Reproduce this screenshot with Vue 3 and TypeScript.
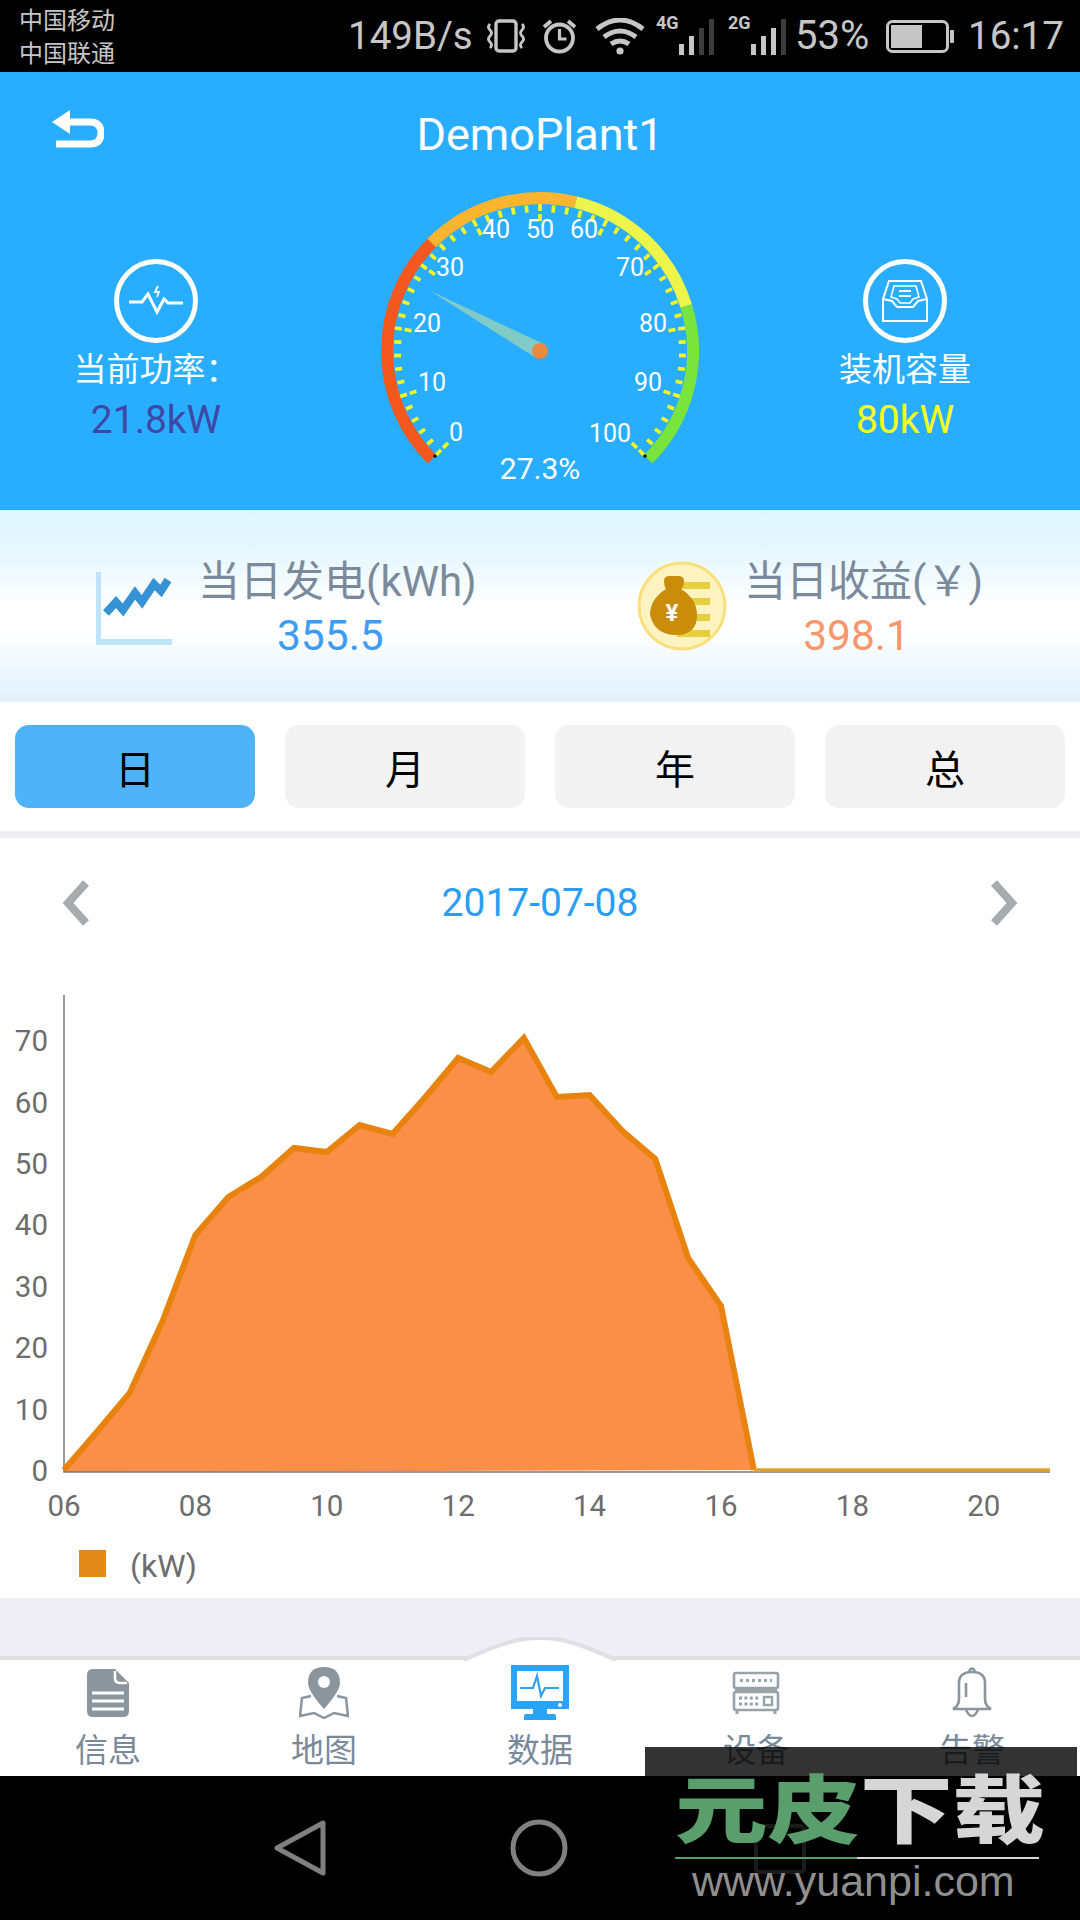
<script setup lang="ts">
// gauge geometry: 270deg sweep, centre in svg coords
const cx = 228
const cy = 157
const polar = (r: number, pct: number) => {
  const a = ((-225 + pct * 2.7) * Math.PI) / 180
  return { x: +(cx + r * Math.cos(a)).toFixed(2), y: +(cy + r * Math.sin(a)).toFixed(2) }
}
const arc = (from: number, to: number) => {
  const a = polar(153, from)
  const b = polar(153, to)
  const large = (to - from) * 2.7 > 180 ? 1 : 0
  return `M${a.x} ${a.y}A153 153 0 ${large} 1 ${b.x} ${b.y}`
}
const bands = [
  { d: arc(0, 33.4), color: '#f4581f' },
  { d: arc(33.3, 55), color: '#fdb52f' },
  { d: arc(55, 77), color: '#edf54a' },
  { d: arc(77, 100), color: '#79e43c' },
]
const ticks = Array.from({ length: 51 }, (_, i) => {
  const pct = i * 2
  const major = i % 5 === 0
  const a = polar(major ? 147 : 146, pct)
  const b = polar(major ? 127 : 139, pct)
  return { x1: a.x, y1: a.y, x2: b.x, y2: b.y, major, key: i }
})
const gaugeLabels = [
  { t: '0', x: 144, y: 247 },
  { t: '10', x: 120, y: 197 },
  { t: '20', x: 115, y: 138 },
  { t: '30', x: 138, y: 82 },
  { t: '40', x: 184, y: 44 },
  { t: '50', x: 228, y: 44 },
  { t: '60', x: 272, y: 44 },
  { t: '70', x: 318, y: 82 },
  { t: '80', x: 341, y: 138 },
  { t: '90', x: 336, y: 197 },
  { t: '100', x: 298, y: 248 },
]
const tip = polar(125, 27.3)
const perp = (-225 + 27.3 * 2.7 + 90) * (Math.PI / 180)
const needle = `${tip.x},${tip.y} ${cx + 8 * Math.cos(perp)},${cy + 8 * Math.sin(perp)} ${cx - 8 * Math.cos(perp)},${cy - 8 * Math.sin(perp)}`
const endCaps = [polar(150, 0), polar(147, 0), polar(150, 100), polar(147, 100)]

// chart: half-hour samples, pixel y values read on the 1920 page
const values = [
  1470, 1432, 1393, 1321, 1235, 1197, 1177, 1148, 1152, 1125, 1134, 1097, 1058, 1072, 1038, 1097, 1095,
  1131, 1159, 1258, 1306, 1470,
]
const xAt = (i: number) => +(64 + i * 32.85).toFixed(1)
const peak = values.map((y, i) => `${xAt(i)},${y}`).join(' ')
const area = `${peak} 64,1472`
const yLabels = [0, 10, 20, 30, 40, 50, 60, 70].map((v, i) => ({ v, y: 1471 - i * 61.4 }))
const xLabels = ['06', '08', '10', '12', '14', '16', '18', '20'].map((t, i) => ({ t, x: 64 + i * 131.4 }))

const periods = ['日', '月', '年', '总']
</script>

<template>
  <div class="page">
    <div class="status">
      <div class="carriers">
        <span>中国移动</span>
        <span>中国联通</span>
      </div>
      <span class="speed">149B/s</span>
      <svg class="st vib" width="40" height="34" viewBox="0 0 40 34" fill="none" stroke="#c6c6c6">
        <rect x="10" y="2" width="20" height="30" rx="3" stroke-width="3.4" />
        <path d="M4 5q-3 3 0 6t0 6 0 6 0 6M36 5q3 3 0 6t0 6 0 6 0 6" stroke-width="2.8" />
      </svg>
      <svg class="st alarm" width="37" height="36" viewBox="0 0 37 36" fill="none" stroke="#c6c6c6">
        <circle cx="18.5" cy="20" r="13.5" stroke-width="3.8" />
        <path d="M18.5 11v10h7" stroke-width="3.2" />
        <path d="M3 9l7-6M34 9l-7-6" stroke-width="3.8" />
      </svg>
      <svg class="st wifi" width="50" height="37" viewBox="0 0 50 37" fill="none" stroke="#c6c6c6" stroke-width="5">
        <path d="M2 11q23-18 46 0M9 19q16-12 32 0M16 26q9-6 18 0" />
        <circle cx="25" cy="33" r="3.6" fill="#c6c6c6" stroke="none" />
      </svg>
      <div class="signal sim-a">
        <b>4G</b>
        <i class="bar on h1"></i><i class="bar on h2"></i><i class="bar h3"></i><i class="bar h4"></i>
      </div>
      <div class="signal sim-b">
        <b>2G</b>
        <i class="bar on h1"></i><i class="bar on h2"></i><i class="bar on h3"></i><i class="bar h4"></i>
      </div>
      <span class="pct">53%</span>
      <svg class="st batt" width="68" height="33" viewBox="0 0 68 33">
        <rect x="1.5" y="1.5" width="60" height="30" rx="5" fill="none" stroke="#c6c6c6" stroke-width="3" />
        <rect x="5" y="5" width="31" height="23" fill="#c6c6c6" />
        <rect x="64" y="10" width="4" height="13" rx="1" fill="#c6c6c6" />
      </svg>
      <span class="clock">16:17</span>
    </div>

    <header class="hero">
      <div class="title-row">
        <svg class="back" width="54" height="44" viewBox="0 0 54 44" fill="none" stroke="#fff">
          <path d="M20 13h20q11 0 11 11t-11 11H6" stroke-width="7" />
          <path d="M2 13L20 1v24z" fill="#fff" stroke="none" />
        </svg>
        <h1>DemoPlant1</h1>
      </div>
      <div class="hero-row">
        <div class="side">
          <div class="ring">
            <svg width="56" height="32" viewBox="0 0 56 32" fill="none" stroke="#fff" stroke-width="3">
              <path d="M1 17h13l6-8 9 18 7-13 4 4h15" />
              <path d="M30 1l-3 6h4l-2 5" stroke-width="1.8" />
            </svg>
          </div>
          <div class="side-label">当前功率：</div>
          <div class="side-value power">21.8kW</div>
        </div>

        <svg class="gauge" width="456" height="316" viewBox="0 0 456 316">
          <path v-for="b in bands" :key="b.color" :d="b.d" :stroke="b.color" stroke-width="12" fill="none" />
          <line
            v-for="t in ticks"
            :key="t.key"
            :x1="t.x1"
            :y1="t.y1"
            :x2="t.x2"
            :y2="t.y2"
            stroke="#f7f71c"
            stroke-width="3.6"
            :stroke-dasharray="t.major ? '7 3' : undefined"
          />
          <line :x1="endCaps[0].x" :y1="endCaps[0].y" :x2="endCaps[1].x" :y2="endCaps[1].y" stroke="#111" stroke-width="3" />
          <line :x1="endCaps[2].x" :y1="endCaps[2].y" :x2="endCaps[3].x" :y2="endCaps[3].y" stroke="#111" stroke-width="3" />
          <text v-for="l in gaugeLabels" :key="l.t" :x="l.x" :y="l.y" class="gauge-num">{{ l.t }}</text>
          <polygon :points="needle" fill="#80cbc8" />
          <circle :cx="cx" :cy="cy" r="8" fill="#e98a3f" />
          <text x="228" y="285" class="gauge-pct">27.3%</text>
        </svg>

        <div class="side right">
          <div class="ring">
            <svg width="48" height="42" viewBox="0 0 48 42" fill="none" stroke="#fff" stroke-width="2">
              <path d="M8 1h32l6 18v22H2V19z" />
              <path d="M2 19l9 2 5 6h16l5-6 9-2" />
              <path d="M13 6h22l3 11-6 2-3 4H19l-3-4-6-2z" stroke-width="1.6" />
              <path d="M18 11h12M18 16h12" stroke-width="2" />
            </svg>
          </div>
          <div class="side-label">装机容量</div>
          <div class="side-value cap">80kW</div>
        </div>
      </div>
    </header>

    <section class="today">
      <div class="today-item first">
        <svg width="76" height="74" viewBox="0 0 76 74" class="today-icon">
          <path d="M2 0v70h74" fill="none" stroke="#bfe4f9" stroke-width="6" />
          <path d="M10 41l10-11 7 8 12-17 7 9 12-18 7 7 7-11" fill="none" stroke="#3592d4" stroke-width="8" />
        </svg>
        <div class="today-text">
          <div class="today-label">当日发电(kWh)</div>
          <div class="today-value gen">355.5</div>
        </div>
      </div>
      <div class="today-item second">
        <svg width="90" height="90" viewBox="0 0 90 90" class="today-icon">
          <circle cx="45" cy="45" r="43" fill="#fdf3c0" stroke="#f9e07c" stroke-width="3" />
          <g fill="#e5cf3c">
            <rect x="40" y="21" width="33" height="7" />
            <rect x="40" y="37" width="33" height="7" />
            <rect x="40" y="53" width="33" height="7" />
            <rect x="40" y="69" width="33" height="7" />
          </g>
          <path
            d="M27 20q0-5 6-5h8q6 0 6 5 0 5-3 8 16 10 16 26 0 20-21 20T13 54q0-16 16-26-2-3-2-8z"
            fill="#c98d0a"
          />
          <text x="35" y="60" class="coin">¥</text>
        </svg>
        <div class="today-text">
          <div class="today-label">当日收益(￥)</div>
          <div class="today-value earn">398.1</div>
        </div>
      </div>
    </section>

    <nav class="periods">
      <button v-for="(p, i) in periods" :key="p" class="period" :class="{ active: i === 0 }">{{ p }}</button>
    </nav>

    <section class="chart-card">
      <div class="date-row">
        <svg width="28" height="46" viewBox="0 0 28 46" fill="none" stroke="#a6abb0" stroke-width="8">
          <path d="M24 3L6 23l18 20" />
        </svg>
        <span class="date">2017-07-08</span>
        <svg width="28" height="46" viewBox="0 0 28 46" fill="none" stroke="#a6abb0" stroke-width="8">
          <path d="M4 3l18 20L4 43" />
        </svg>
      </div>
      <svg class="chart" width="1080" height="630" viewBox="0 968 1080 630">
        <polygon :points="area" fill="#fb8f47" />
        <path d="M64 995V1472H1050" fill="none" stroke="#777" stroke-width="1.5" />
        <polyline :points="peak" fill="none" stroke="#e8830f" stroke-width="6" />
        <path d="M754 1470H1050" stroke="#e2a02c" stroke-width="3.5" />
        <text v-for="l in yLabels" :key="l.v" x="48" :y="l.y + 10" text-anchor="end" class="axis">{{ l.v }}</text>
        <text v-for="l in xLabels" :key="l.t" :x="l.x" y="1516" text-anchor="middle" class="axis">{{ l.t }}</text>
        <rect x="79" y="1550" width="27" height="27" fill="#e28a17" />
        <text x="130" y="1577" class="legend">(kW)</text>
      </svg>
    </section>

    <div class="gap"></div>

    <footer class="tabbar">
      <svg class="tab-bump" width="160" height="26" viewBox="0 0 160 26">
        <path d="M4 24Q30 12 50 6 80-2 110 6 130 12 156 24z" fill="#fff" />
        <path d="M4 23Q30 11 50 5 80-3 110 5 130 11 156 23" fill="none" stroke="#dfdfe4" stroke-width="4" />
      </svg>
      <div class="tab">
        <div class="tab-icon">
          <svg width="42" height="48" viewBox="0 0 42 48">
            <path d="M6 0h22l14 14v28q0 6-6 6H6q-6 0-6-6V6q0-6 6-6z" fill="#8a959e" />
            <path d="M28 2v7q0 5 5 5h7" fill="none" stroke="#fff" stroke-width="2.5" />
            <path d="M5 24h32M5 32h32M5 40h32" stroke="#fff" stroke-width="3" />
          </svg>
        </div>
        <span>信息</span>
      </div>
      <div class="tab">
        <div class="tab-icon">
          <svg width="50" height="52" viewBox="0 0 50 52">
            <path d="M12 29l-9 2-2 18 14-3 10 5 10-5 14 3-2-18-9-2" fill="none" stroke="#8a959e" stroke-width="2.5" />
            <path d="M25 0q16 0 16 16 0 8-16 26Q9 24 9 16 9 0 25 0z" fill="#8a959e" />
            <circle cx="25" cy="15" r="6" fill="#fff" />
          </svg>
        </div>
        <span>地图</span>
      </div>
      <div class="tab active">
        <div class="tab-icon">
          <svg width="58" height="56" viewBox="0 0 58 56">
            <rect width="58" height="44" fill="#2aa2f5" />
            <rect x="6" y="6" width="46" height="30" fill="#fff" />
            <path d="M9 23h13l4-12 4 20 4-8h14" fill="none" stroke="#2aa2f5" stroke-width="2.2" />
            <circle cx="49" cy="40" r="2" fill="#fff" />
            <path d="M22 44h14v5h7q2 0 2 3v3H13v-3q0-3 2-3h7z" fill="#2aa2f5" />
          </svg>
        </div>
        <span>数据</span>
      </div>
      <div class="tab">
        <div class="tab-icon">
          <svg width="48" height="44" viewBox="0 0 48 44" fill="none" stroke="#98a2a9" stroke-width="2.6">
            <rect x="2" y="2" width="44" height="15" rx="2" />
            <rect x="2" y="21" width="44" height="18" rx="2" />
            <path d="M8 9.5h32" stroke-dasharray="3 3" stroke-width="3" />
            <path d="M7 27h20M7 33h20" stroke-dasharray="3 2.4" stroke-width="3" />
            <rect x="32" y="26" width="8" height="8" stroke-width="2.4" />
            <path d="M5 39v4M43 39v4M3 19h42" stroke-width="3" />
          </svg>
        </div>
        <span>设备</span>
      </div>
      <div class="tab">
        <div class="tab-icon">
          <svg width="42" height="52" viewBox="0 0 42 52" fill="none" stroke="#8a959e" stroke-width="2.6">
            <path d="M2 42q6-3 6-10V16Q8 5 21 5t13 11v16q0 7 6 10z" />
            <path d="M18 4q3-5 6 0M15 43q6 12 12 0M15 16v14" />
          </svg>
        </div>
        <span>告警</span>
      </div>
    </footer>

    <div class="navbar">
      <svg width="56" height="60" viewBox="0 0 56 60" fill="none" stroke="#808080" stroke-width="5" stroke-linejoin="round">
        <path d="M51 5v50L5 30z" />
      </svg>
      <svg width="60" height="60" viewBox="0 0 60 60" fill="none" stroke="#808080" stroke-width="5">
        <circle cx="30" cy="30" r="26" />
      </svg>
      <svg width="52" height="50" viewBox="0 0 52 50" fill="none" stroke="#1a1a1a" stroke-width="4">
        <rect x="2" y="2" width="48" height="46" rx="3" />
      </svg>
    </div>

    <div class="wm-band"></div>
    <div class="watermark">
      <div class="wm-name"><span class="wm-green">元皮</span><span class="wm-light">下载</span></div>
      <div class="wm-rule"></div>
      <div class="wm-url">www.yuanpi.com</div>
    </div>
  </div>
</template>

<style>
html,
body {
  margin: 0;
  background: #000;
}
</style>

<style scoped>
.page {
  position: relative;
  width: 1080px;
  height: 1920px;
  display: flex;
  flex-direction: column;
  overflow: hidden;
  font-family: Roboto, "Noto Sans CJK SC", sans-serif;
  background: #fff;
}

/* status bar */
.status {
  height: 72px;
  flex: none;
  background: #000;
  color: #c6c6c6;
  display: flex;
  align-items: center;
  padding-left: 19px;
  box-sizing: border-box;
}
.carriers {
  width: 329px;
  display: flex;
  flex-direction: column;
  font-size: 24px;
  line-height: 33px;
  margin-top: 3px;
}
.speed,
.pct,
.clock {
  font-size: 38.5px;
  line-height: 72px;
  white-space: nowrap;
}
.speed {
  width: 138px;
}
.st {
  flex: none;
}
.vib {
  margin-right: 15px;
}
.alarm {
  margin-right: 17px;
}
.wifi {
  margin-right: 11px;
}
.signal {
  position: relative;
  width: 58px;
  height: 38px;
  display: flex;
  align-items: flex-end;
  justify-content: flex-end;
  gap: 5px;
}
.signal b {
  position: absolute;
  left: 0;
  top: -4px;
  font-size: 18px;
  line-height: 20px;
  font-weight: 700;
}
.sim-a {
  margin-right: 14px;
}
.sim-b {
  margin-right: 9px;
}
.bar {
  width: 5px;
  background: #3c3c3c;
}
.bar.on {
  background: #c6c6c6;
}
.h1 {
  height: 11px;
}
.h2 {
  height: 19px;
}
.h3 {
  height: 27px;
}
.h4 {
  height: 36px;
}
.pct {
  width: 91px;
  font-size: 40px;
}
.batt {
  margin-right: 14px;
}

/* header */
.hero {
  height: 438px;
  flex: none;
  background: #29aeff;
  color: #fff;
}
.title-row {
  position: relative;
  height: 122px;
  display: flex;
  align-items: center;
  justify-content: center;
}
.title-row h1 {
  margin: 2px 0 0;
  font-size: 45px;
  font-weight: 400;
}
.back {
  position: absolute;
  left: 50px;
  top: 37px;
}
.hero-row {
  display: grid;
  grid-template-columns: 312px 456px 312px;
}
.gauge {
  overflow: visible;
}
.side {
  display: flex;
  flex-direction: column;
  align-items: center;
  padding-top: 65px;
}
.side.right {
  padding-right: 38px;
}
.ring {
  width: 84px;
  height: 84px;
  box-sizing: border-box;
  border: 5px solid #fff;
  border-radius: 50%;
  display: flex;
  align-items: center;
  justify-content: center;
}
.side-label {
  margin-top: 6px;
  font-size: 33px;
  line-height: 42px;
  white-space: nowrap;
}
.side-value {
  margin-top: 4px;
  font-size: 39px;
  line-height: 50px;
}
.power {
  color: #3f48a5;
}
.cap {
  color: #ffff14;
}
.gauge-num {
  fill: #fff;
  font-size: 25px;
  text-anchor: middle;
}
.gauge-pct {
  fill: #fff;
  font-size: 30px;
  text-anchor: middle;
}

/* today's numbers */
.today {
  height: 192px;
  flex: none;
  display: flex;
  align-items: center;
  background: linear-gradient(#dff5fd 0%, #e8f8fe 25%, #fff 50%, #fff 62%, #e0f1fd 100%);
  color: #7b8a9b;
}
.today-item {
  display: flex;
  align-items: center;
}
.first {
  margin-left: 96px;
  width: 541px;
}
.today-icon {
  flex: none;
}
.first .today-icon {
  margin-top: 6px;
  margin-right: 26px;
}
.second .today-icon {
  margin-right: 17px;
}
.today-text {
  display: flex;
  flex-direction: column;
  align-items: center;
  padding-top: 8px;
}
.today-label {
  font-size: 42px;
  line-height: 52px;
  white-space: nowrap;
}
.today-value {
  font-size: 42.5px;
  line-height: 56px;
  margin-right: 14px;
}
.gen {
  color: #3d9cf5;
}
.earn {
  color: #f9966c;
}
.coin {
  fill: #fff;
  font-size: 24px;
  font-weight: 700;
  text-anchor: middle;
}

/* period switch */
.periods {
  height: 129px;
  flex: none;
  box-sizing: border-box;
  padding: 23px 15px 0;
  display: grid;
  grid-template-columns: repeat(4, 240px);
  justify-content: space-between;
  align-items: start;
}
.period {
  height: 83px;
  border: 0;
  border-radius: 14px;
  background: #f2f2f2;
  color: #000;
  font: 40px Roboto, "Noto Sans CJK SC", sans-serif;
  padding: 0;
}
.period.active {
  background: #4fb3f8;
}

/* chart */
.chart-card {
  height: 767px;
  flex: none;
  border-top: 7px solid #eeeef4;
  box-sizing: border-box;
}
.date-row {
  height: 130px;
  display: flex;
  align-items: center;
  justify-content: space-between;
  padding: 0 62px;
}
.date {
  color: #2a9df4;
  font-size: 39px;
}
.chart {
  display: block;
}
.axis {
  fill: #6d6d6d;
  font-size: 29.5px;
}
.legend {
  fill: #6d6d6d;
  font-size: 32px;
}
.gap {
  height: 62px;
  flex: none;
  background: #eeeef4;
}

/* bottom tabs */
.tabbar {
  position: relative;
  height: 116px;
  flex: none;
  display: grid;
  grid-template-columns: repeat(5, 216px);
  background: #fff;
  box-shadow: 0 -4px 0 #dfdfe4;
}
.tab-bump {
  position: absolute;
  left: 460px;
  top: -23px;
}
.tab {
  position: relative;
  display: flex;
  flex-direction: column;
  align-items: center;
}
.tab-icon {
  height: 66px;
  display: flex;
  align-items: center;
  justify-content: center;
}
.tab span {
  margin-top: 8px;
  height: 31px;
  overflow: hidden;
  font-size: 33px;
  line-height: 33px;
  color: #7b8a9b;
}

/* system nav */
.navbar {
  position: relative;
  flex: none;
  height: 144px;
  background: #000;
}
.navbar svg {
  position: absolute;
  top: 42px;
}
.navbar svg:nth-child(1) {
  left: 272px;
}
.navbar svg:nth-child(2) {
  left: 509px;
}
.navbar svg:nth-child(3) {
  left: 754px;
  top: 48px;
}

/* site watermark laid over the capture */
.wm-band {
  position: absolute;
  left: 645px;
  top: 1747px;
  width: 432px;
  height: 29px;
  background: rgba(0, 0, 0, 0.8);
}
.watermark {
  position: absolute;
  left: 675px;
  top: 1776px;
  width: 372px;
}
.wm-name {
  height: 72px;
  width: 298px;
  font-size: 74px;
  line-height: 72px;
  font-weight: 900;
  white-space: nowrap;
  transform: scaleX(1.25);
  transform-origin: left center;
}
.wm-green {
  color: #5a9e6e;
}
.wm-light {
  color: #d6d6d6;
}
.wm-rule {
  margin-top: 9px;
  width: 364px;
  height: 2px;
  background: linear-gradient(90deg, #5a9e6e 50%, #d6d6d6 50%);
}
.wm-url {
  margin-left: 17px;
  font-family: "Liberation Sans", sans-serif;
  font-size: 43px;
  line-height: 44px;
  color: #8f8f8f;
  white-space: nowrap;
}
</style>
